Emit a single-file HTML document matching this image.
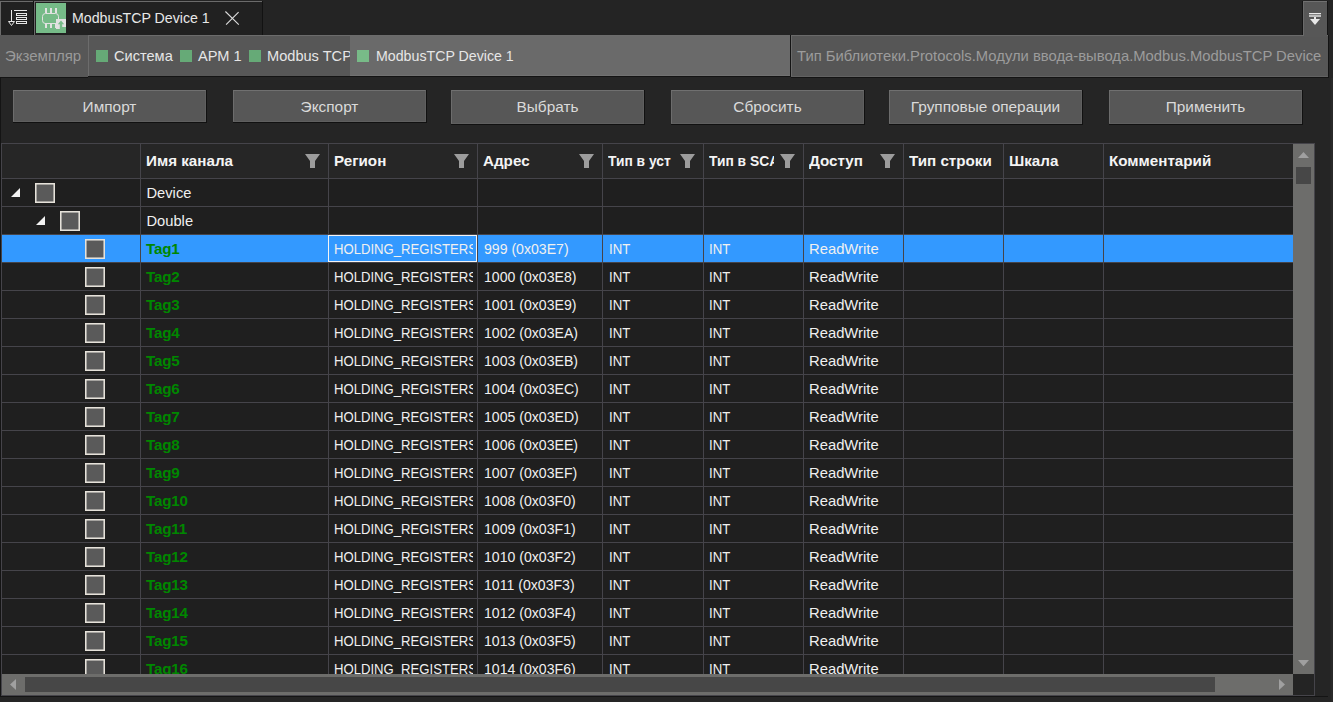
<!DOCTYPE html>
<html><head><meta charset="utf-8"><style>
html,body{margin:0;padding:0;}
body{width:1333px;height:702px;position:relative;overflow:hidden;background:#252525;font-family:"Liberation Sans", sans-serif;}
</style></head><body>
<div style="position:absolute;left:0px;top:0px;width:1333px;height:35px;background:#242424;"></div><div style="position:absolute;left:0px;top:1px;width:33px;height:34px;background:#212121;border-top:1px solid #6b6b6b;border-left:1px solid #6b6b6b;box-sizing:border-box;"></div><div style="position:absolute;left:33px;top:1px;width:1px;height:34px;background:#121212;"></div><svg style="position:absolute;left:0;top:0" width="34" height="35" viewBox="0 0 34 35">
<g fill="none" stroke="#e6e6e6" stroke-width="1">
<line x1="11.5" y1="10" x2="11.5" y2="22"/>
<path d="M8.5 21.5 L14.5 21.5 L11.5 25.5 Z"/>
<line x1="14" y1="10.5" x2="27" y2="10.5"/>
<rect x="16.5" y="13.5" width="10" height="2"/>
<rect x="16.5" y="17.5" width="10" height="2"/>
<rect x="16.5" y="21.5" width="10" height="2"/>
</g></svg><div style="position:absolute;left:34px;top:1px;width:228px;height:34px;background:#212121;border-top:1px solid #6b6b6b;border-left:1px solid #6b6b6b;box-sizing:border-box;"></div><div style="position:absolute;left:262px;top:1px;width:1px;height:34px;background:#121212;"></div><svg style="position:absolute;left:36px;top:3px" width="30" height="30" viewBox="0 0 30 30">
<rect x="0" y="0" width="30" height="30" fill="#76bb88"/>
<g fill="#e2e2e2">
<rect x="9" y="5" width="2" height="5"/><rect x="14" y="5" width="2" height="5"/><rect x="19" y="5" width="2" height="5"/>
<rect x="9" y="20" width="2" height="5"/><rect x="14" y="20" width="2" height="5"/><rect x="19" y="20" width="2" height="5"/>
</g>
<rect x="6.5" y="10.5" width="16" height="10" rx="3" fill="none" stroke="#e2e2e2" stroke-width="1"/>
<rect x="20" y="16" width="10" height="10" fill="#e2e2e2"/>
<path d="M21.8 21.2 L25 17.6 L28.2 21.2 Z M23.8 20.5 h2.4 v3.4 h3.8 v2.2 h-6.2 Z" fill="#76bb88"/>
</svg><div style="position:absolute;left:72px;top:8px;font-size:14.2px;line-height:20px;height:20px;white-space:nowrap;color:#e8e8e8;letter-spacing:0px;">ModbusTCP Device 1</div><svg style="position:absolute;left:224px;top:10px" width="16" height="16" viewBox="0 0 16 16">
<path d="M1.4 1.5 L14.8 14.6 M14.6 2.1 L2.1 14.6" stroke="#dcdcdc" stroke-width="1.1" fill="none"/></svg><div style="position:absolute;left:1302px;top:1px;width:1px;height:34px;background:#151515;"></div><div style="position:absolute;left:1303px;top:1px;width:24px;height:34px;background:#575757;border-top:1px solid #707070;border-left:1px solid #6a6a6a;box-sizing:border-box;"></div><div style="position:absolute;left:1327px;top:1px;width:1px;height:34px;background:#151515;"></div><svg style="position:absolute;left:1303px;top:0" width="24" height="35" viewBox="0 0 24 35">
<rect x="6" y="13" width="12" height="1.3" fill="#e8e8e8"/>
<rect x="6" y="15" width="12" height="2" fill="#bdbdbd"/>
<rect x="11" y="17" width="2" height="3" fill="#e8e8e8"/>
<path d="M7 19 L17 19 L12 25 Z" fill="#e8e8e8"/>
</svg><div style="position:absolute;left:0px;top:35px;width:88px;height:42px;background:#575757;"></div><div style="position:absolute;left:0px;top:77px;width:88px;height:1px;background:#141414;"></div><div style="position:absolute;left:5px;top:45.6px;font-size:15px;line-height:20px;height:20px;white-space:nowrap;color:#9a9a9a;">Экземпляр</div><div style="position:absolute;left:88px;top:35px;width:702px;height:41px;background:#575757;border-top:1px solid #6c6c6c;border-left:1px solid #6c6c6c;box-sizing:border-box;"></div><div style="position:absolute;left:88px;top:76px;width:703px;height:1px;background:#141414;"></div><div style="position:absolute;left:96px;top:50px;width:12px;height:12px;background:#66aa77;"></div><div style="position:absolute;left:114px;top:45.6px;font-size:14.6px;line-height:20px;height:20px;white-space:nowrap;color:#e6e6e6;">Система</div><div style="position:absolute;left:180px;top:50px;width:12px;height:12px;background:#66aa77;"></div><div style="position:absolute;left:198px;top:45.6px;font-size:14.6px;line-height:20px;height:20px;white-space:nowrap;color:#e6e6e6;">АРМ 1</div><div style="position:absolute;left:249px;top:35px;width:101px;height:41px;overflow:hidden"><div style="position:absolute;left:0px;top:15px;width:12px;height:12px;background:#66aa77;"></div><div style="position:absolute;left:18px;top:10.6px;font-size:14.6px;line-height:20px;height:20px;white-space:nowrap;color:#e6e6e6;">Modbus TCP</div></div><div style="position:absolute;left:350px;top:36px;width:440px;height:40px;background:#6a6a6a;border-bottom:1px solid #727272;box-sizing:border-box;"></div><div style="position:absolute;left:790px;top:35px;width:1px;height:42px;background:#141414;"></div><div style="position:absolute;left:357px;top:50px;width:12px;height:12px;background:#78bb88;"></div><div style="position:absolute;left:376px;top:45.6px;font-size:14.2px;line-height:20px;height:20px;white-space:nowrap;color:#e6e6e6;">ModbusTCP Device 1</div><div style="position:absolute;left:791px;top:35px;width:537px;height:42px;background:#565656;border-top:1px solid #6a6a6a;border-left:1px solid #6a6a6a;border-bottom:1px solid #626262;box-sizing:border-box;"></div><div style="position:absolute;left:797px;top:45.6px;font-size:14.8px;line-height:20px;height:20px;white-space:nowrap;color:#9c9c9c;">Тип Библиотеки.Protocols.Модули ввода-вывода.Modbus.ModbusTCP Device</div><div style="position:absolute;left:1328px;top:35px;width:1px;height:43px;background:#141414;"></div><div style="position:absolute;left:791px;top:77px;width:538px;height:1px;background:#141414;"></div><div style="position:absolute;left:0px;top:78px;width:1px;height:619px;background:#141414;"></div><div style="position:absolute;left:1331px;top:78px;width:2px;height:624px;background:#292929;"></div><div style="position:absolute;left:1304px;top:35px;width:23px;height:2px;background:#575757;"></div><div style="position:absolute;left:13px;top:90px;width:193px;height:32px;background:#575757;border-top:1px solid #707070;border-left:1px solid #6c6c6c;border-right:1px solid #5f5f5f;border-bottom:1px solid #5f5f5f;box-sizing:border-box;"></div><div style="position:absolute;left:206px;top:90px;width:1px;height:33px;background:#111;"></div><div style="position:absolute;left:13px;top:122px;width:194px;height:1px;background:#111;"></div><div style="position:absolute;left:13px;top:97px;width:193px;text-align:center;font-size:15.4px;line-height:20px;color:#dadada;white-space:nowrap">Импорт</div><div style="position:absolute;left:233px;top:90px;width:193px;height:32px;background:#575757;border-top:1px solid #707070;border-left:1px solid #6c6c6c;border-right:1px solid #5f5f5f;border-bottom:1px solid #5f5f5f;box-sizing:border-box;"></div><div style="position:absolute;left:426px;top:90px;width:1px;height:33px;background:#111;"></div><div style="position:absolute;left:233px;top:122px;width:194px;height:1px;background:#111;"></div><div style="position:absolute;left:233px;top:97px;width:193px;text-align:center;font-size:15.4px;line-height:20px;color:#dadada;white-space:nowrap">Экспорт</div><div style="position:absolute;left:451px;top:90px;width:193px;height:34px;background:#575757;border-top:1px solid #707070;border-left:1px solid #6c6c6c;border-right:1px solid #5f5f5f;border-bottom:1px solid #5f5f5f;box-sizing:border-box;"></div><div style="position:absolute;left:644px;top:90px;width:1px;height:35px;background:#111;"></div><div style="position:absolute;left:451px;top:124px;width:194px;height:1px;background:#111;"></div><div style="position:absolute;left:451px;top:97px;width:193px;text-align:center;font-size:15.4px;line-height:20px;color:#dadada;white-space:nowrap">Выбрать</div><div style="position:absolute;left:671px;top:90px;width:193px;height:34px;background:#575757;border-top:1px solid #707070;border-left:1px solid #6c6c6c;border-right:1px solid #5f5f5f;border-bottom:1px solid #5f5f5f;box-sizing:border-box;"></div><div style="position:absolute;left:864px;top:90px;width:1px;height:35px;background:#111;"></div><div style="position:absolute;left:671px;top:124px;width:194px;height:1px;background:#111;"></div><div style="position:absolute;left:671px;top:97px;width:193px;text-align:center;font-size:15.4px;line-height:20px;color:#dadada;white-space:nowrap">Сбросить</div><div style="position:absolute;left:889px;top:90px;width:193px;height:34px;background:#575757;border-top:1px solid #707070;border-left:1px solid #6c6c6c;border-right:1px solid #5f5f5f;border-bottom:1px solid #5f5f5f;box-sizing:border-box;"></div><div style="position:absolute;left:1082px;top:90px;width:1px;height:35px;background:#111;"></div><div style="position:absolute;left:889px;top:124px;width:194px;height:1px;background:#111;"></div><div style="position:absolute;left:889px;top:97px;width:193px;text-align:center;font-size:15.4px;line-height:20px;color:#dadada;white-space:nowrap">Групповые операции</div><div style="position:absolute;left:1109px;top:90px;width:193px;height:34px;background:#575757;border-top:1px solid #707070;border-left:1px solid #6c6c6c;border-right:1px solid #5f5f5f;border-bottom:1px solid #5f5f5f;box-sizing:border-box;"></div><div style="position:absolute;left:1302px;top:90px;width:1px;height:35px;background:#111;"></div><div style="position:absolute;left:1109px;top:124px;width:194px;height:1px;background:#111;"></div><div style="position:absolute;left:1109px;top:97px;width:193px;text-align:center;font-size:15.4px;line-height:20px;color:#dadada;white-space:nowrap">Применить</div><div style="position:absolute;left:1px;top:143px;width:1314px;height:553px;background:#1f1f1f;"></div><div style="position:absolute;left:1px;top:143px;width:1314px;height:1px;background:#45444a;"></div><div style="position:absolute;left:1px;top:143px;width:1px;height:553px;background:#45444a;"></div><div style="position:absolute;left:1314px;top:143px;width:1px;height:553px;background:#45444a;"></div><div style="position:absolute;left:1px;top:695px;width:1314px;height:1px;background:#45444a;"></div><div style="position:absolute;left:0px;top:696px;width:1328px;height:1px;background:#141414;"></div><div style="position:absolute;left:2px;top:144px;width:1291px;height:34px;background:#262626;"></div><div style="position:absolute;left:146px;top:151px;width:153px;overflow:hidden;font-size:15.2px;line-height:20px;height:20px;white-space:nowrap;color:#f4f4f4;font-weight:bold;">Имя канала</div><svg style="position:absolute;left:305px;top:154px" width="15" height="14" viewBox="0 0 15 14"><path d="M0 0 H15 L10 7 V14 H5 V7 Z" fill="#9c9c9c"/></svg><div style="position:absolute;left:334px;top:151px;width:114px;overflow:hidden;font-size:15.2px;line-height:20px;height:20px;white-space:nowrap;color:#f4f4f4;font-weight:bold;">Регион</div><svg style="position:absolute;left:454px;top:154px" width="15" height="14" viewBox="0 0 15 14"><path d="M0 0 H15 L10 7 V14 H5 V7 Z" fill="#9c9c9c"/></svg><div style="position:absolute;left:483px;top:151px;width:90px;overflow:hidden;font-size:15.2px;line-height:20px;height:20px;white-space:nowrap;color:#f4f4f4;font-weight:bold;">Адрес</div><svg style="position:absolute;left:579px;top:154px" width="15" height="14" viewBox="0 0 15 14"><path d="M0 0 H15 L10 7 V14 H5 V7 Z" fill="#9c9c9c"/></svg><div style="position:absolute;left:608px;top:151px;width:66px;height:20px;overflow:hidden"><div style="position:absolute;left:0px;top:0px;font-size:15.2px;line-height:20px;height:20px;white-space:nowrap;color:#f4f4f4;font-weight:bold;transform:scaleX(0.91);transform-origin:0 0;">Тип в уст</div></div><svg style="position:absolute;left:680px;top:154px" width="15" height="14" viewBox="0 0 15 14"><path d="M0 0 H15 L10 7 V14 H5 V7 Z" fill="#9c9c9c"/></svg><div style="position:absolute;left:709px;top:151px;width:65px;height:20px;overflow:hidden"><div style="position:absolute;left:0px;top:0px;font-size:15.2px;line-height:20px;height:20px;white-space:nowrap;color:#f4f4f4;font-weight:bold;transform:scaleX(0.91);transform-origin:0 0;">Тип в SCADA</div></div><svg style="position:absolute;left:780px;top:154px" width="15" height="14" viewBox="0 0 15 14"><path d="M0 0 H15 L10 7 V14 H5 V7 Z" fill="#9c9c9c"/></svg><div style="position:absolute;left:809px;top:151px;width:65px;overflow:hidden;font-size:15.2px;line-height:20px;height:20px;white-space:nowrap;color:#f4f4f4;font-weight:bold;">Доступ</div><svg style="position:absolute;left:880px;top:154px" width="15" height="14" viewBox="0 0 15 14"><path d="M0 0 H15 L10 7 V14 H5 V7 Z" fill="#9c9c9c"/></svg><div style="position:absolute;left:909px;top:151px;width:92px;overflow:hidden;font-size:15.2px;line-height:20px;height:20px;white-space:nowrap;color:#f4f4f4;font-weight:bold;">Тип строки</div><div style="position:absolute;left:1009px;top:151px;width:92px;overflow:hidden;font-size:15.2px;line-height:20px;height:20px;white-space:nowrap;color:#f4f4f4;font-weight:bold;">Шкала</div><div style="position:absolute;left:1109px;top:151px;width:182px;overflow:hidden;font-size:15.2px;line-height:20px;height:20px;white-space:nowrap;color:#f4f4f4;font-weight:bold;">Комментарий</div><div style="position:absolute;left:2px;top:178px;width:1291px;height:1px;background:#45444a;"></div><div style="position:absolute;left:2px;top:206px;width:1291px;height:1px;background:#45444a;"></div><div style="position:absolute;left:2px;top:234px;width:1291px;height:1px;background:#45444a;"></div><div style="position:absolute;left:2px;top:262px;width:1291px;height:1px;background:#45444a;"></div><div style="position:absolute;left:2px;top:290px;width:1291px;height:1px;background:#45444a;"></div><div style="position:absolute;left:2px;top:318px;width:1291px;height:1px;background:#45444a;"></div><div style="position:absolute;left:2px;top:346px;width:1291px;height:1px;background:#45444a;"></div><div style="position:absolute;left:2px;top:374px;width:1291px;height:1px;background:#45444a;"></div><div style="position:absolute;left:2px;top:402px;width:1291px;height:1px;background:#45444a;"></div><div style="position:absolute;left:2px;top:430px;width:1291px;height:1px;background:#45444a;"></div><div style="position:absolute;left:2px;top:458px;width:1291px;height:1px;background:#45444a;"></div><div style="position:absolute;left:2px;top:486px;width:1291px;height:1px;background:#45444a;"></div><div style="position:absolute;left:2px;top:514px;width:1291px;height:1px;background:#45444a;"></div><div style="position:absolute;left:2px;top:542px;width:1291px;height:1px;background:#45444a;"></div><div style="position:absolute;left:2px;top:570px;width:1291px;height:1px;background:#45444a;"></div><div style="position:absolute;left:2px;top:598px;width:1291px;height:1px;background:#45444a;"></div><div style="position:absolute;left:2px;top:626px;width:1291px;height:1px;background:#45444a;"></div><div style="position:absolute;left:2px;top:654px;width:1291px;height:1px;background:#45444a;"></div><div style="position:absolute;left:140px;top:144px;width:1px;height:530px;background:#45444a;"></div><div style="position:absolute;left:328px;top:144px;width:1px;height:530px;background:#45444a;"></div><div style="position:absolute;left:477px;top:144px;width:1px;height:530px;background:#45444a;"></div><div style="position:absolute;left:602px;top:144px;width:1px;height:530px;background:#45444a;"></div><div style="position:absolute;left:703px;top:144px;width:1px;height:530px;background:#45444a;"></div><div style="position:absolute;left:803px;top:144px;width:1px;height:530px;background:#45444a;"></div><div style="position:absolute;left:903px;top:144px;width:1px;height:530px;background:#45444a;"></div><div style="position:absolute;left:1003px;top:144px;width:1px;height:530px;background:#45444a;"></div><div style="position:absolute;left:1103px;top:144px;width:1px;height:530px;background:#45444a;"></div><div style="position:absolute;left:2px;top:235px;width:1291px;height:27px;background:#3399ff;"></div><div style="position:absolute;left:140px;top:235px;width:1px;height:27px;background:#45444a;"></div><div style="position:absolute;left:328px;top:235px;width:1px;height:27px;background:#45444a;"></div><div style="position:absolute;left:477px;top:235px;width:1px;height:27px;background:#45444a;"></div><div style="position:absolute;left:602px;top:235px;width:1px;height:27px;background:#45444a;"></div><div style="position:absolute;left:703px;top:235px;width:1px;height:27px;background:#45444a;"></div><div style="position:absolute;left:803px;top:235px;width:1px;height:27px;background:#45444a;"></div><div style="position:absolute;left:903px;top:235px;width:1px;height:27px;background:#45444a;"></div><div style="position:absolute;left:1003px;top:235px;width:1px;height:27px;background:#45444a;"></div><div style="position:absolute;left:1103px;top:235px;width:1px;height:27px;background:#45444a;"></div><div style="position:absolute;left:0;top:0;width:1293px;height:674px;overflow:hidden"><svg style="position:absolute;left:10px;top:187px" width="11" height="11" viewBox="0 0 11 11"><path d="M1 10 L10 1 L10 10 Z" fill="#f2f2f2"/></svg><svg style="position:absolute;left:35px;top:183px" width="20" height="20" viewBox="0 0 20 20"><rect x="0.75" y="0.75" width="18.5" height="18.5" fill="#5a5a5a" stroke="#e6e2da" stroke-width="1.6"/></svg><div style="position:absolute;left:146.5px;top:183px;font-size:14.7px;line-height:20px;height:20px;white-space:nowrap;color:#f0f0f0;">Device</div><svg style="position:absolute;left:35px;top:215px" width="11" height="11" viewBox="0 0 11 11"><path d="M1 10 L10 1 L10 10 Z" fill="#f2f2f2"/></svg><svg style="position:absolute;left:60px;top:211px" width="20" height="20" viewBox="0 0 20 20"><rect x="0.75" y="0.75" width="18.5" height="18.5" fill="#5a5a5a" stroke="#e6e2da" stroke-width="1.6"/></svg><div style="position:absolute;left:146.5px;top:211px;font-size:14.7px;line-height:20px;height:20px;white-space:nowrap;color:#f0f0f0;">Double</div><svg style="position:absolute;left:85px;top:239px" width="20" height="20" viewBox="0 0 20 20"><rect x="0.75" y="0.75" width="18.5" height="18.5" fill="#5a5a5a" stroke="#e6e2da" stroke-width="1.6"/></svg><div style="position:absolute;left:146px;top:239px;font-size:15.2px;line-height:20px;height:20px;white-space:nowrap;color:#008700;font-weight:bold;letter-spacing:-0.2px;">Tag1</div><div style="position:absolute;left:328px;top:235px;width:145px;height:27px;overflow:hidden"><div style="position:absolute;left:6px;top:4px;font-size:15px;line-height:20px;height:20px;white-space:nowrap;color:#f0f0f0;transform:scaleX(0.875);transform-origin:0 0;">HOLDING_REGISTERS</div></div><div style="position:absolute;left:484px;top:239px;font-size:14.1px;line-height:20px;height:20px;white-space:nowrap;color:#f0f0f0;">999 (0x03E7)</div><div style="position:absolute;left:609px;top:239px;font-size:15px;line-height:20px;height:20px;white-space:nowrap;color:#f0f0f0;transform:scaleX(0.88);transform-origin:0 0;">INT</div><div style="position:absolute;left:709px;top:239px;font-size:15px;line-height:20px;height:20px;white-space:nowrap;color:#f0f0f0;transform:scaleX(0.88);transform-origin:0 0;">INT</div><div style="position:absolute;left:809px;top:239px;font-size:14.8px;line-height:20px;height:20px;white-space:nowrap;color:#f0f0f0;">ReadWrite</div><svg style="position:absolute;left:85px;top:267px" width="20" height="20" viewBox="0 0 20 20"><rect x="0.75" y="0.75" width="18.5" height="18.5" fill="#5a5a5a" stroke="#e6e2da" stroke-width="1.6"/></svg><div style="position:absolute;left:146px;top:267px;font-size:15.2px;line-height:20px;height:20px;white-space:nowrap;color:#008700;font-weight:bold;letter-spacing:-0.2px;">Tag2</div><div style="position:absolute;left:328px;top:263px;width:145px;height:27px;overflow:hidden"><div style="position:absolute;left:6px;top:4px;font-size:15px;line-height:20px;height:20px;white-space:nowrap;color:#f0f0f0;transform:scaleX(0.875);transform-origin:0 0;">HOLDING_REGISTERS</div></div><div style="position:absolute;left:484px;top:267px;font-size:14.1px;line-height:20px;height:20px;white-space:nowrap;color:#f0f0f0;">1000 (0x03E8)</div><div style="position:absolute;left:609px;top:267px;font-size:15px;line-height:20px;height:20px;white-space:nowrap;color:#f0f0f0;transform:scaleX(0.88);transform-origin:0 0;">INT</div><div style="position:absolute;left:709px;top:267px;font-size:15px;line-height:20px;height:20px;white-space:nowrap;color:#f0f0f0;transform:scaleX(0.88);transform-origin:0 0;">INT</div><div style="position:absolute;left:809px;top:267px;font-size:14.8px;line-height:20px;height:20px;white-space:nowrap;color:#f0f0f0;">ReadWrite</div><svg style="position:absolute;left:85px;top:295px" width="20" height="20" viewBox="0 0 20 20"><rect x="0.75" y="0.75" width="18.5" height="18.5" fill="#5a5a5a" stroke="#e6e2da" stroke-width="1.6"/></svg><div style="position:absolute;left:146px;top:295px;font-size:15.2px;line-height:20px;height:20px;white-space:nowrap;color:#008700;font-weight:bold;letter-spacing:-0.2px;">Tag3</div><div style="position:absolute;left:328px;top:291px;width:145px;height:27px;overflow:hidden"><div style="position:absolute;left:6px;top:4px;font-size:15px;line-height:20px;height:20px;white-space:nowrap;color:#f0f0f0;transform:scaleX(0.875);transform-origin:0 0;">HOLDING_REGISTERS</div></div><div style="position:absolute;left:484px;top:295px;font-size:14.1px;line-height:20px;height:20px;white-space:nowrap;color:#f0f0f0;">1001 (0x03E9)</div><div style="position:absolute;left:609px;top:295px;font-size:15px;line-height:20px;height:20px;white-space:nowrap;color:#f0f0f0;transform:scaleX(0.88);transform-origin:0 0;">INT</div><div style="position:absolute;left:709px;top:295px;font-size:15px;line-height:20px;height:20px;white-space:nowrap;color:#f0f0f0;transform:scaleX(0.88);transform-origin:0 0;">INT</div><div style="position:absolute;left:809px;top:295px;font-size:14.8px;line-height:20px;height:20px;white-space:nowrap;color:#f0f0f0;">ReadWrite</div><svg style="position:absolute;left:85px;top:323px" width="20" height="20" viewBox="0 0 20 20"><rect x="0.75" y="0.75" width="18.5" height="18.5" fill="#5a5a5a" stroke="#e6e2da" stroke-width="1.6"/></svg><div style="position:absolute;left:146px;top:323px;font-size:15.2px;line-height:20px;height:20px;white-space:nowrap;color:#008700;font-weight:bold;letter-spacing:-0.2px;">Tag4</div><div style="position:absolute;left:328px;top:319px;width:145px;height:27px;overflow:hidden"><div style="position:absolute;left:6px;top:4px;font-size:15px;line-height:20px;height:20px;white-space:nowrap;color:#f0f0f0;transform:scaleX(0.875);transform-origin:0 0;">HOLDING_REGISTERS</div></div><div style="position:absolute;left:484px;top:323px;font-size:14.1px;line-height:20px;height:20px;white-space:nowrap;color:#f0f0f0;">1002 (0x03EA)</div><div style="position:absolute;left:609px;top:323px;font-size:15px;line-height:20px;height:20px;white-space:nowrap;color:#f0f0f0;transform:scaleX(0.88);transform-origin:0 0;">INT</div><div style="position:absolute;left:709px;top:323px;font-size:15px;line-height:20px;height:20px;white-space:nowrap;color:#f0f0f0;transform:scaleX(0.88);transform-origin:0 0;">INT</div><div style="position:absolute;left:809px;top:323px;font-size:14.8px;line-height:20px;height:20px;white-space:nowrap;color:#f0f0f0;">ReadWrite</div><svg style="position:absolute;left:85px;top:351px" width="20" height="20" viewBox="0 0 20 20"><rect x="0.75" y="0.75" width="18.5" height="18.5" fill="#5a5a5a" stroke="#e6e2da" stroke-width="1.6"/></svg><div style="position:absolute;left:146px;top:351px;font-size:15.2px;line-height:20px;height:20px;white-space:nowrap;color:#008700;font-weight:bold;letter-spacing:-0.2px;">Tag5</div><div style="position:absolute;left:328px;top:347px;width:145px;height:27px;overflow:hidden"><div style="position:absolute;left:6px;top:4px;font-size:15px;line-height:20px;height:20px;white-space:nowrap;color:#f0f0f0;transform:scaleX(0.875);transform-origin:0 0;">HOLDING_REGISTERS</div></div><div style="position:absolute;left:484px;top:351px;font-size:14.1px;line-height:20px;height:20px;white-space:nowrap;color:#f0f0f0;">1003 (0x03EB)</div><div style="position:absolute;left:609px;top:351px;font-size:15px;line-height:20px;height:20px;white-space:nowrap;color:#f0f0f0;transform:scaleX(0.88);transform-origin:0 0;">INT</div><div style="position:absolute;left:709px;top:351px;font-size:15px;line-height:20px;height:20px;white-space:nowrap;color:#f0f0f0;transform:scaleX(0.88);transform-origin:0 0;">INT</div><div style="position:absolute;left:809px;top:351px;font-size:14.8px;line-height:20px;height:20px;white-space:nowrap;color:#f0f0f0;">ReadWrite</div><svg style="position:absolute;left:85px;top:379px" width="20" height="20" viewBox="0 0 20 20"><rect x="0.75" y="0.75" width="18.5" height="18.5" fill="#5a5a5a" stroke="#e6e2da" stroke-width="1.6"/></svg><div style="position:absolute;left:146px;top:379px;font-size:15.2px;line-height:20px;height:20px;white-space:nowrap;color:#008700;font-weight:bold;letter-spacing:-0.2px;">Tag6</div><div style="position:absolute;left:328px;top:375px;width:145px;height:27px;overflow:hidden"><div style="position:absolute;left:6px;top:4px;font-size:15px;line-height:20px;height:20px;white-space:nowrap;color:#f0f0f0;transform:scaleX(0.875);transform-origin:0 0;">HOLDING_REGISTERS</div></div><div style="position:absolute;left:484px;top:379px;font-size:14.1px;line-height:20px;height:20px;white-space:nowrap;color:#f0f0f0;">1004 (0x03EC)</div><div style="position:absolute;left:609px;top:379px;font-size:15px;line-height:20px;height:20px;white-space:nowrap;color:#f0f0f0;transform:scaleX(0.88);transform-origin:0 0;">INT</div><div style="position:absolute;left:709px;top:379px;font-size:15px;line-height:20px;height:20px;white-space:nowrap;color:#f0f0f0;transform:scaleX(0.88);transform-origin:0 0;">INT</div><div style="position:absolute;left:809px;top:379px;font-size:14.8px;line-height:20px;height:20px;white-space:nowrap;color:#f0f0f0;">ReadWrite</div><svg style="position:absolute;left:85px;top:407px" width="20" height="20" viewBox="0 0 20 20"><rect x="0.75" y="0.75" width="18.5" height="18.5" fill="#5a5a5a" stroke="#e6e2da" stroke-width="1.6"/></svg><div style="position:absolute;left:146px;top:407px;font-size:15.2px;line-height:20px;height:20px;white-space:nowrap;color:#008700;font-weight:bold;letter-spacing:-0.2px;">Tag7</div><div style="position:absolute;left:328px;top:403px;width:145px;height:27px;overflow:hidden"><div style="position:absolute;left:6px;top:4px;font-size:15px;line-height:20px;height:20px;white-space:nowrap;color:#f0f0f0;transform:scaleX(0.875);transform-origin:0 0;">HOLDING_REGISTERS</div></div><div style="position:absolute;left:484px;top:407px;font-size:14.1px;line-height:20px;height:20px;white-space:nowrap;color:#f0f0f0;">1005 (0x03ED)</div><div style="position:absolute;left:609px;top:407px;font-size:15px;line-height:20px;height:20px;white-space:nowrap;color:#f0f0f0;transform:scaleX(0.88);transform-origin:0 0;">INT</div><div style="position:absolute;left:709px;top:407px;font-size:15px;line-height:20px;height:20px;white-space:nowrap;color:#f0f0f0;transform:scaleX(0.88);transform-origin:0 0;">INT</div><div style="position:absolute;left:809px;top:407px;font-size:14.8px;line-height:20px;height:20px;white-space:nowrap;color:#f0f0f0;">ReadWrite</div><svg style="position:absolute;left:85px;top:435px" width="20" height="20" viewBox="0 0 20 20"><rect x="0.75" y="0.75" width="18.5" height="18.5" fill="#5a5a5a" stroke="#e6e2da" stroke-width="1.6"/></svg><div style="position:absolute;left:146px;top:435px;font-size:15.2px;line-height:20px;height:20px;white-space:nowrap;color:#008700;font-weight:bold;letter-spacing:-0.2px;">Tag8</div><div style="position:absolute;left:328px;top:431px;width:145px;height:27px;overflow:hidden"><div style="position:absolute;left:6px;top:4px;font-size:15px;line-height:20px;height:20px;white-space:nowrap;color:#f0f0f0;transform:scaleX(0.875);transform-origin:0 0;">HOLDING_REGISTERS</div></div><div style="position:absolute;left:484px;top:435px;font-size:14.1px;line-height:20px;height:20px;white-space:nowrap;color:#f0f0f0;">1006 (0x03EE)</div><div style="position:absolute;left:609px;top:435px;font-size:15px;line-height:20px;height:20px;white-space:nowrap;color:#f0f0f0;transform:scaleX(0.88);transform-origin:0 0;">INT</div><div style="position:absolute;left:709px;top:435px;font-size:15px;line-height:20px;height:20px;white-space:nowrap;color:#f0f0f0;transform:scaleX(0.88);transform-origin:0 0;">INT</div><div style="position:absolute;left:809px;top:435px;font-size:14.8px;line-height:20px;height:20px;white-space:nowrap;color:#f0f0f0;">ReadWrite</div><svg style="position:absolute;left:85px;top:463px" width="20" height="20" viewBox="0 0 20 20"><rect x="0.75" y="0.75" width="18.5" height="18.5" fill="#5a5a5a" stroke="#e6e2da" stroke-width="1.6"/></svg><div style="position:absolute;left:146px;top:463px;font-size:15.2px;line-height:20px;height:20px;white-space:nowrap;color:#008700;font-weight:bold;letter-spacing:-0.2px;">Tag9</div><div style="position:absolute;left:328px;top:459px;width:145px;height:27px;overflow:hidden"><div style="position:absolute;left:6px;top:4px;font-size:15px;line-height:20px;height:20px;white-space:nowrap;color:#f0f0f0;transform:scaleX(0.875);transform-origin:0 0;">HOLDING_REGISTERS</div></div><div style="position:absolute;left:484px;top:463px;font-size:14.1px;line-height:20px;height:20px;white-space:nowrap;color:#f0f0f0;">1007 (0x03EF)</div><div style="position:absolute;left:609px;top:463px;font-size:15px;line-height:20px;height:20px;white-space:nowrap;color:#f0f0f0;transform:scaleX(0.88);transform-origin:0 0;">INT</div><div style="position:absolute;left:709px;top:463px;font-size:15px;line-height:20px;height:20px;white-space:nowrap;color:#f0f0f0;transform:scaleX(0.88);transform-origin:0 0;">INT</div><div style="position:absolute;left:809px;top:463px;font-size:14.8px;line-height:20px;height:20px;white-space:nowrap;color:#f0f0f0;">ReadWrite</div><svg style="position:absolute;left:85px;top:491px" width="20" height="20" viewBox="0 0 20 20"><rect x="0.75" y="0.75" width="18.5" height="18.5" fill="#5a5a5a" stroke="#e6e2da" stroke-width="1.6"/></svg><div style="position:absolute;left:146px;top:491px;font-size:15.2px;line-height:20px;height:20px;white-space:nowrap;color:#008700;font-weight:bold;letter-spacing:-0.2px;">Tag10</div><div style="position:absolute;left:328px;top:487px;width:145px;height:27px;overflow:hidden"><div style="position:absolute;left:6px;top:4px;font-size:15px;line-height:20px;height:20px;white-space:nowrap;color:#f0f0f0;transform:scaleX(0.875);transform-origin:0 0;">HOLDING_REGISTERS</div></div><div style="position:absolute;left:484px;top:491px;font-size:14.1px;line-height:20px;height:20px;white-space:nowrap;color:#f0f0f0;">1008 (0x03F0)</div><div style="position:absolute;left:609px;top:491px;font-size:15px;line-height:20px;height:20px;white-space:nowrap;color:#f0f0f0;transform:scaleX(0.88);transform-origin:0 0;">INT</div><div style="position:absolute;left:709px;top:491px;font-size:15px;line-height:20px;height:20px;white-space:nowrap;color:#f0f0f0;transform:scaleX(0.88);transform-origin:0 0;">INT</div><div style="position:absolute;left:809px;top:491px;font-size:14.8px;line-height:20px;height:20px;white-space:nowrap;color:#f0f0f0;">ReadWrite</div><svg style="position:absolute;left:85px;top:519px" width="20" height="20" viewBox="0 0 20 20"><rect x="0.75" y="0.75" width="18.5" height="18.5" fill="#5a5a5a" stroke="#e6e2da" stroke-width="1.6"/></svg><div style="position:absolute;left:146px;top:519px;font-size:15.2px;line-height:20px;height:20px;white-space:nowrap;color:#008700;font-weight:bold;letter-spacing:-0.2px;">Tag11</div><div style="position:absolute;left:328px;top:515px;width:145px;height:27px;overflow:hidden"><div style="position:absolute;left:6px;top:4px;font-size:15px;line-height:20px;height:20px;white-space:nowrap;color:#f0f0f0;transform:scaleX(0.875);transform-origin:0 0;">HOLDING_REGISTERS</div></div><div style="position:absolute;left:484px;top:519px;font-size:14.1px;line-height:20px;height:20px;white-space:nowrap;color:#f0f0f0;">1009 (0x03F1)</div><div style="position:absolute;left:609px;top:519px;font-size:15px;line-height:20px;height:20px;white-space:nowrap;color:#f0f0f0;transform:scaleX(0.88);transform-origin:0 0;">INT</div><div style="position:absolute;left:709px;top:519px;font-size:15px;line-height:20px;height:20px;white-space:nowrap;color:#f0f0f0;transform:scaleX(0.88);transform-origin:0 0;">INT</div><div style="position:absolute;left:809px;top:519px;font-size:14.8px;line-height:20px;height:20px;white-space:nowrap;color:#f0f0f0;">ReadWrite</div><svg style="position:absolute;left:85px;top:547px" width="20" height="20" viewBox="0 0 20 20"><rect x="0.75" y="0.75" width="18.5" height="18.5" fill="#5a5a5a" stroke="#e6e2da" stroke-width="1.6"/></svg><div style="position:absolute;left:146px;top:547px;font-size:15.2px;line-height:20px;height:20px;white-space:nowrap;color:#008700;font-weight:bold;letter-spacing:-0.2px;">Tag12</div><div style="position:absolute;left:328px;top:543px;width:145px;height:27px;overflow:hidden"><div style="position:absolute;left:6px;top:4px;font-size:15px;line-height:20px;height:20px;white-space:nowrap;color:#f0f0f0;transform:scaleX(0.875);transform-origin:0 0;">HOLDING_REGISTERS</div></div><div style="position:absolute;left:484px;top:547px;font-size:14.1px;line-height:20px;height:20px;white-space:nowrap;color:#f0f0f0;">1010 (0x03F2)</div><div style="position:absolute;left:609px;top:547px;font-size:15px;line-height:20px;height:20px;white-space:nowrap;color:#f0f0f0;transform:scaleX(0.88);transform-origin:0 0;">INT</div><div style="position:absolute;left:709px;top:547px;font-size:15px;line-height:20px;height:20px;white-space:nowrap;color:#f0f0f0;transform:scaleX(0.88);transform-origin:0 0;">INT</div><div style="position:absolute;left:809px;top:547px;font-size:14.8px;line-height:20px;height:20px;white-space:nowrap;color:#f0f0f0;">ReadWrite</div><svg style="position:absolute;left:85px;top:575px" width="20" height="20" viewBox="0 0 20 20"><rect x="0.75" y="0.75" width="18.5" height="18.5" fill="#5a5a5a" stroke="#e6e2da" stroke-width="1.6"/></svg><div style="position:absolute;left:146px;top:575px;font-size:15.2px;line-height:20px;height:20px;white-space:nowrap;color:#008700;font-weight:bold;letter-spacing:-0.2px;">Tag13</div><div style="position:absolute;left:328px;top:571px;width:145px;height:27px;overflow:hidden"><div style="position:absolute;left:6px;top:4px;font-size:15px;line-height:20px;height:20px;white-space:nowrap;color:#f0f0f0;transform:scaleX(0.875);transform-origin:0 0;">HOLDING_REGISTERS</div></div><div style="position:absolute;left:484px;top:575px;font-size:14.1px;line-height:20px;height:20px;white-space:nowrap;color:#f0f0f0;">1011 (0x03F3)</div><div style="position:absolute;left:609px;top:575px;font-size:15px;line-height:20px;height:20px;white-space:nowrap;color:#f0f0f0;transform:scaleX(0.88);transform-origin:0 0;">INT</div><div style="position:absolute;left:709px;top:575px;font-size:15px;line-height:20px;height:20px;white-space:nowrap;color:#f0f0f0;transform:scaleX(0.88);transform-origin:0 0;">INT</div><div style="position:absolute;left:809px;top:575px;font-size:14.8px;line-height:20px;height:20px;white-space:nowrap;color:#f0f0f0;">ReadWrite</div><svg style="position:absolute;left:85px;top:603px" width="20" height="20" viewBox="0 0 20 20"><rect x="0.75" y="0.75" width="18.5" height="18.5" fill="#5a5a5a" stroke="#e6e2da" stroke-width="1.6"/></svg><div style="position:absolute;left:146px;top:603px;font-size:15.2px;line-height:20px;height:20px;white-space:nowrap;color:#008700;font-weight:bold;letter-spacing:-0.2px;">Tag14</div><div style="position:absolute;left:328px;top:599px;width:145px;height:27px;overflow:hidden"><div style="position:absolute;left:6px;top:4px;font-size:15px;line-height:20px;height:20px;white-space:nowrap;color:#f0f0f0;transform:scaleX(0.875);transform-origin:0 0;">HOLDING_REGISTERS</div></div><div style="position:absolute;left:484px;top:603px;font-size:14.1px;line-height:20px;height:20px;white-space:nowrap;color:#f0f0f0;">1012 (0x03F4)</div><div style="position:absolute;left:609px;top:603px;font-size:15px;line-height:20px;height:20px;white-space:nowrap;color:#f0f0f0;transform:scaleX(0.88);transform-origin:0 0;">INT</div><div style="position:absolute;left:709px;top:603px;font-size:15px;line-height:20px;height:20px;white-space:nowrap;color:#f0f0f0;transform:scaleX(0.88);transform-origin:0 0;">INT</div><div style="position:absolute;left:809px;top:603px;font-size:14.8px;line-height:20px;height:20px;white-space:nowrap;color:#f0f0f0;">ReadWrite</div><svg style="position:absolute;left:85px;top:631px" width="20" height="20" viewBox="0 0 20 20"><rect x="0.75" y="0.75" width="18.5" height="18.5" fill="#5a5a5a" stroke="#e6e2da" stroke-width="1.6"/></svg><div style="position:absolute;left:146px;top:631px;font-size:15.2px;line-height:20px;height:20px;white-space:nowrap;color:#008700;font-weight:bold;letter-spacing:-0.2px;">Tag15</div><div style="position:absolute;left:328px;top:627px;width:145px;height:27px;overflow:hidden"><div style="position:absolute;left:6px;top:4px;font-size:15px;line-height:20px;height:20px;white-space:nowrap;color:#f0f0f0;transform:scaleX(0.875);transform-origin:0 0;">HOLDING_REGISTERS</div></div><div style="position:absolute;left:484px;top:631px;font-size:14.1px;line-height:20px;height:20px;white-space:nowrap;color:#f0f0f0;">1013 (0x03F5)</div><div style="position:absolute;left:609px;top:631px;font-size:15px;line-height:20px;height:20px;white-space:nowrap;color:#f0f0f0;transform:scaleX(0.88);transform-origin:0 0;">INT</div><div style="position:absolute;left:709px;top:631px;font-size:15px;line-height:20px;height:20px;white-space:nowrap;color:#f0f0f0;transform:scaleX(0.88);transform-origin:0 0;">INT</div><div style="position:absolute;left:809px;top:631px;font-size:14.8px;line-height:20px;height:20px;white-space:nowrap;color:#f0f0f0;">ReadWrite</div><svg style="position:absolute;left:85px;top:659px" width="20" height="20" viewBox="0 0 20 20"><rect x="0.75" y="0.75" width="18.5" height="18.5" fill="#5a5a5a" stroke="#e6e2da" stroke-width="1.6"/></svg><div style="position:absolute;left:146px;top:659px;font-size:15.2px;line-height:20px;height:20px;white-space:nowrap;color:#008700;font-weight:bold;letter-spacing:-0.2px;">Tag16</div><div style="position:absolute;left:328px;top:655px;width:145px;height:27px;overflow:hidden"><div style="position:absolute;left:6px;top:4px;font-size:15px;line-height:20px;height:20px;white-space:nowrap;color:#f0f0f0;transform:scaleX(0.875);transform-origin:0 0;">HOLDING_REGISTERS</div></div><div style="position:absolute;left:484px;top:659px;font-size:14.1px;line-height:20px;height:20px;white-space:nowrap;color:#f0f0f0;">1014 (0x03F6)</div><div style="position:absolute;left:609px;top:659px;font-size:15px;line-height:20px;height:20px;white-space:nowrap;color:#f0f0f0;transform:scaleX(0.88);transform-origin:0 0;">INT</div><div style="position:absolute;left:709px;top:659px;font-size:15px;line-height:20px;height:20px;white-space:nowrap;color:#f0f0f0;transform:scaleX(0.88);transform-origin:0 0;">INT</div><div style="position:absolute;left:809px;top:659px;font-size:14.8px;line-height:20px;height:20px;white-space:nowrap;color:#f0f0f0;">ReadWrite</div></div><div style="position:absolute;left:328px;top:235px;width:149px;height:27px;border:1px solid #f4f4f4;box-sizing:border-box;"></div><div style="position:absolute;left:1293px;top:144px;width:21px;height:530px;background:#6d6d6b;"></div><svg style="position:absolute;left:1293px;top:144px" width="20" height="20" viewBox="0 0 20 20"><path d="M5 14 L16 14 L10.5 8 Z" fill="#a0a0a0"/></svg><div style="position:absolute;left:1296px;top:167px;width:15px;height:17px;background:#474747;"></div><svg style="position:absolute;left:1293px;top:654px" width="20" height="20" viewBox="0 0 20 20"><path d="M5 6 L16 6 L10.5 12.2 Z" fill="#a0a0a0"/></svg><div style="position:absolute;left:2px;top:674px;width:1291px;height:21px;background:#6d6d6b;"></div><svg style="position:absolute;left:2px;top:674px" width="20" height="21" viewBox="0 0 20 21"><path d="M8 10.5 L14 5 L14 16 Z" fill="#a0a0a0"/></svg><div style="position:absolute;left:25px;top:677px;width:1190px;height:15px;background:#474747;"></div><svg style="position:absolute;left:1273px;top:674px" width="20" height="21" viewBox="0 0 20 21"><path d="M12 10.5 L6 5 L6 16 Z" fill="#a0a0a0"/></svg><div style="position:absolute;left:1293px;top:674px;width:21px;height:21px;background:#242424;"></div>
</body></html>
